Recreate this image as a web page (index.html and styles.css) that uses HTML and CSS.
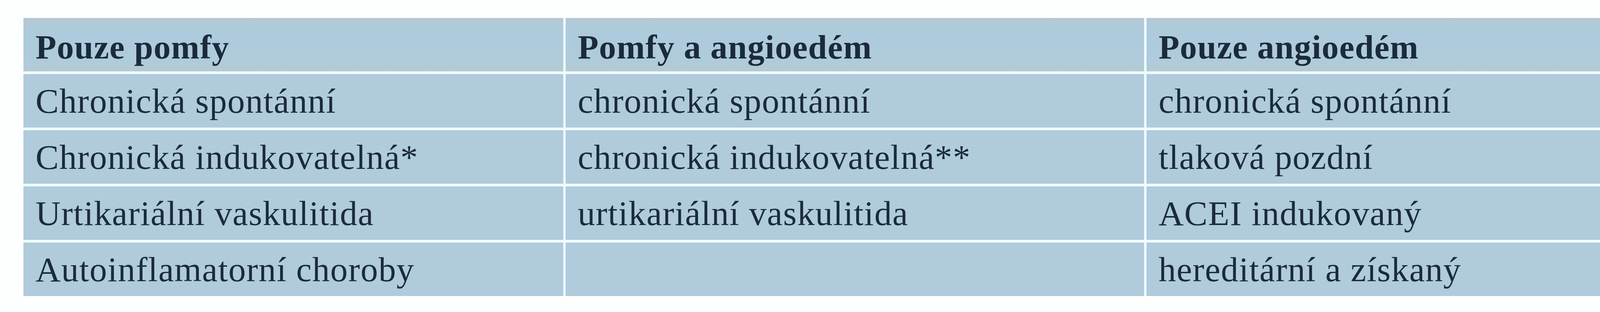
FILE: index.html
```html
<!DOCTYPE html>
<html lang="cs">
<head>
<meta charset="utf-8">
<title>Urtikarie</title>
<link rel="stylesheet" href="styles.css">
</head>
<body>
<div class="page">
  <div class="table">
    <div class="cell head">Pouze pomfy</div>
    <div class="cell head">Pomfy a angioedém</div>
    <div class="cell head">Pouze angioedém</div>

    <div class="cell">Chronická spontánní</div>
    <div class="cell">chronická spontánní</div>
    <div class="cell">chronická spontánní</div>

    <div class="cell">Chronická indukovatelná*</div>
    <div class="cell">chronická indukovatelná**</div>
    <div class="cell">tlaková pozdní</div>

    <div class="cell">Urtikariální vaskulitida</div>
    <div class="cell">urtikariální vaskulitida</div>
    <div class="cell">ACEI indukovaný</div>

    <div class="cell">Autoinflamatorní choroby</div>
    <div class="cell"></div>
    <div class="cell">hereditární a získaný</div>
  </div>
</div>
</body>
</html>
```

FILE: styles.css
```css
html, body {
  margin: 0;
  padding: 0;
  background: #fdfefe;
}

.page {
  padding: 46px 0 0 60px;
}

.table {
  display: grid;
  grid-template-columns: 1382px 1481px 1296px;
  grid-auto-rows: 137px;
  gap: 7px 6px;
  width: max-content;
  background: #effdff;
  font-family: "Liberation Serif", "Times New Roman", serif;
  color: #1b2b3a;
}

.cell {
  display: flex;
  align-items: center;
  padding-left: 31px;
  background: #afcbdc;
  font-size: 89px;
  letter-spacing: 1.6px;
  white-space: nowrap;
}

.head {
  font-weight: bold;
  font-size: 87px;
  letter-spacing: 1.4px;
  padding-top: 12px;
  box-sizing: border-box;
  background: linear-gradient(#b7c8d1, #adcbdd 20%, #afcbdc 80%, #b5cad3);
}
```
